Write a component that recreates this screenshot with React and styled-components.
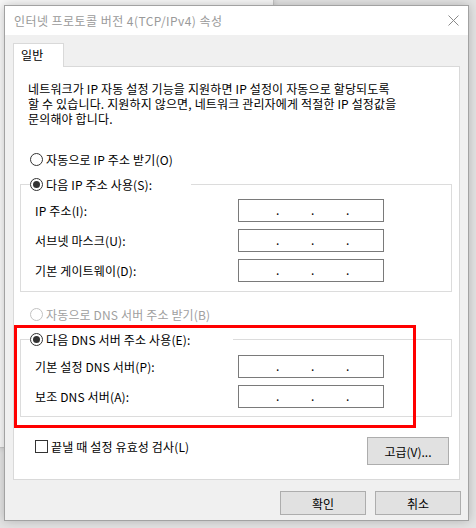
import React from "react"
import styled, { createGlobalStyle } from "styled-components"

const GlobalStyle = createGlobalStyle`
  html, body {
    margin: 0;
    padding: 0;
  }
  body {
    font-family: "Noto Sans CJK KR", "Noto Sans", sans-serif;
    font-size: 12px;
    letter-spacing: 0.15px;
    color: #000;
  }
`

const Desktop = styled.div`
  position: relative;
  width: 476px;
  height: 528px;
  overflow: hidden;
  background: #e4e4e4;
`

// window lying behind the dialog, only its edges show
const BackWindow = styled.div`
  position: absolute;
  left: -20px;
  top: -20px;
  width: 294px;
  height: 468px;
  box-sizing: border-box;
  background: #f8f8f8;
  border: 1px solid #c6c6c6;
  box-shadow: 0 0 6px rgba(0, 0, 0, 0.12);
`

const Dialog = styled.div`
  position: absolute;
  left: 4px;
  top: 5px;
  width: 465px;
  height: 516px;
  box-sizing: border-box;
  border: 1px solid #a2a2a2;
  background: #f0f0f0;
  display: flex;
  flex-direction: column;
  box-shadow: 0 0 10px rgba(0, 0, 0, 0.22);
`

const TitleBar = styled.div`
  height: 29px;
  flex: none;
  background: #fff;
  display: flex;
  align-items: center;
  justify-content: space-between;
  padding: 0 9px;
`

const Title = styled.span`
  color: #9a9a9a;
  line-height: 16px;
  letter-spacing: 0.45px;
`

const Body = styled.div`
  flex: 1;
  display: flex;
  flex-direction: column;
  padding: 8px 8px 0;
`

const TabStrip = styled.div`
  display: flex;
`

const Tab = styled.div`
  position: relative;
  z-index: 1;
  width: 51px;
  height: 24px;
  box-sizing: border-box;
  margin-bottom: -1px;
  padding-left: 7px;
  line-height: 22px;
  background: #fff;
  border: 1px solid #d9d9d9;
  border-bottom: none;
`

const Panel = styled.div`
  display: flex;
  flex-direction: column;
  background: #fff;
  border: 1px solid #d9d9d9;
`

const Description = styled.div`
  margin: 14px 0 0 14px;
`

const DescLine = styled.div`
  height: 15px;
  line-height: 15px;
  white-space: nowrap;
`

const RadioRow = styled.label`
  display: flex;
  align-items: center;
  gap: 3px;
  height: 16px;
  margin: ${(p) => p.$mt || 0}px 0 0 ${(p) => p.$ml || 0}px;
  color: ${(p) => (p.$disabled ? "#a0a0a0" : "#000")};
  white-space: nowrap;
`

const RadioDot = styled.span`
  width: 13px;
  height: 13px;
  box-sizing: border-box;
  border-radius: 50%;
  border: 1px solid ${(p) => (p.$disabled ? "#c2c2c2" : "#333")};
  background: #fff;
  display: grid;
  place-items: center;
  flex: none;

  &::after {
    content: "";
    display: ${(p) => (p.$checked ? "block" : "none")};
    width: 7px;
    height: 7px;
    border-radius: 50%;
    background: #333;
  }
`

const GroupBox = styled.fieldset`
  margin: 9px 7px 0 6px;
  padding: ${(p) => p.$pt}px 0 ${(p) => p.$pb}px 9px;
  border: 1px solid #dcdcdc;
  min-width: 0;
`

const Legend = styled.legend`
  padding: 0;
  width: ${(p) => p.$w}px;
`

const Fields = styled.div`
  display: grid;
  grid-template-columns: 203px 146px;
  row-gap: 7px;
  align-items: center;
  padding-left: 5px;
`

const FieldLabel = styled.span`
  line-height: 16px;
  white-space: nowrap;
`

const IpBox = styled.div`
  height: 23px;
  box-sizing: border-box;
  border: 1px solid #7a7a7a;
  background: #fff;
  display: flex;
  justify-content: center;
  gap: 33px;
  line-height: 20px;
  padding-left: 2px;
`

const Dot = styled.span`
  width: 2px;
  text-align: center;
`

const BottomRow = styled.div`
  display: flex;
  justify-content: space-between;
  align-items: flex-start;
  margin: 20px 10px 14px 21px;
`

const CheckRow = styled.label`
  display: flex;
  align-items: center;
  gap: 3px;
  height: 13px;
  margin-top: 3px;
  white-space: nowrap;
`

const CheckBox = styled.span`
  width: 13px;
  height: 13px;
  box-sizing: border-box;
  border: 1px solid #333;
  background: #fff;
  flex: none;
`

const Button = styled.button`
  width: ${(p) => p.$w}px;
  height: ${(p) => p.$h}px;
  padding: 0;
  font: inherit;
  color: #000;
  background: #e1e1e1;
  border: 1px solid #adadad;
`

const Footer = styled.div`
  display: flex;
  justify-content: flex-end;
  gap: 9px;
  margin: 11px -1px 0 0;
`

// red annotation drawn over the DNS group
const Highlight = styled.div`
  position: absolute;
  left: 14px;
  top: 325px;
  width: 402px;
  height: 103px;
  box-sizing: border-box;
  border: 3px solid #ff0000;
  pointer-events: none;
`

const CloseIcon = () => (
  <svg width="11" height="11" viewBox="0 0 11 11">
    <path d="M0.5 0.5 L10.5 10.5 M10.5 0.5 L0.5 10.5" stroke="#8a8a8a" strokeWidth="1" fill="none" />
  </svg>
)

const Radio = ({ checked, disabled, children, ml, mt }) => (
  <RadioRow $disabled={disabled} $ml={ml} $mt={mt}>
    <RadioDot $checked={checked} $disabled={disabled} />
    {children}
  </RadioRow>
)

const IpField = () => (
  <IpBox>
    <Dot>.</Dot>
    <Dot>.</Dot>
    <Dot>.</Dot>
  </IpBox>
)

const descLines = [
  "네트워크가 IP 자동 설정 기능을 지원하면 IP 설정이 자동으로 할당되도록",
  "할 수 있습니다. 지원하지 않으면, 네트워크 관리자에게 적절한 IP 설정값을",
  "문의해야 합니다.",
]
const ipRows = ["IP 주소(I):", "서브넷 마스크(U):", "기본 게이트웨이(D):"]
const dnsRows = ["기본 설정 DNS 서버(P):", "보조 DNS 서버(A):"]

export default function App() {
  return (
    <>
      <GlobalStyle />
      <Desktop>
        <BackWindow />
        <Dialog>
          <TitleBar>
            <Title>인터넷 프로토콜 버전 4(TCP/IPv4) 속성</Title>
            <CloseIcon />
          </TitleBar>
          <Body>
            <TabStrip>
              <Tab>일반</Tab>
            </TabStrip>
            <Panel>
              <Description>
                {descLines.map((line) => (
                  <DescLine key={line}>{line}</DescLine>
                ))}
              </Description>

              <Radio ml={16} mt={25}>자동으로 IP 주소 받기(O)</Radio>

              <GroupBox $pt={7} $pb={9}>
                <Legend $w={161}>
                  <Radio checked>다음 IP 주소 사용(S):</Radio>
                </Legend>
                <Fields>
                  {ipRows.map((label) => (
                    <React.Fragment key={label}>
                      <FieldLabel>{label}</FieldLabel>
                      <IpField />
                    </React.Fragment>
                  ))}
                </Fields>
              </GroupBox>

              <Radio disabled ml={16} mt={14}>자동으로 DNS 서버 주소 받기(B)</Radio>

              <GroupBox $pt={8} $pb={8}>
                <Legend $w={203}>
                  <Radio checked>다음 DNS 서버 주소 사용(E):</Radio>
                </Legend>
                <Fields>
                  {dnsRows.map((label) => (
                    <React.Fragment key={label}>
                      <FieldLabel>{label}</FieldLabel>
                      <IpField />
                    </React.Fragment>
                  ))}
                </Fields>
              </GroupBox>

              <BottomRow>
                <CheckRow>
                  <CheckBox />
                  끝낼 때 설정 유효성 검사(L)
                </CheckRow>
                <Button $w={82} $h={28}>고급(V)...</Button>
              </BottomRow>
            </Panel>
            <Footer>
              <Button $w={86} $h={24}>확인</Button>
              <Button $w={86} $h={24}>취소</Button>
            </Footer>
          </Body>
        </Dialog>
        <Highlight />
      </Desktop>
    </>
  )
}
